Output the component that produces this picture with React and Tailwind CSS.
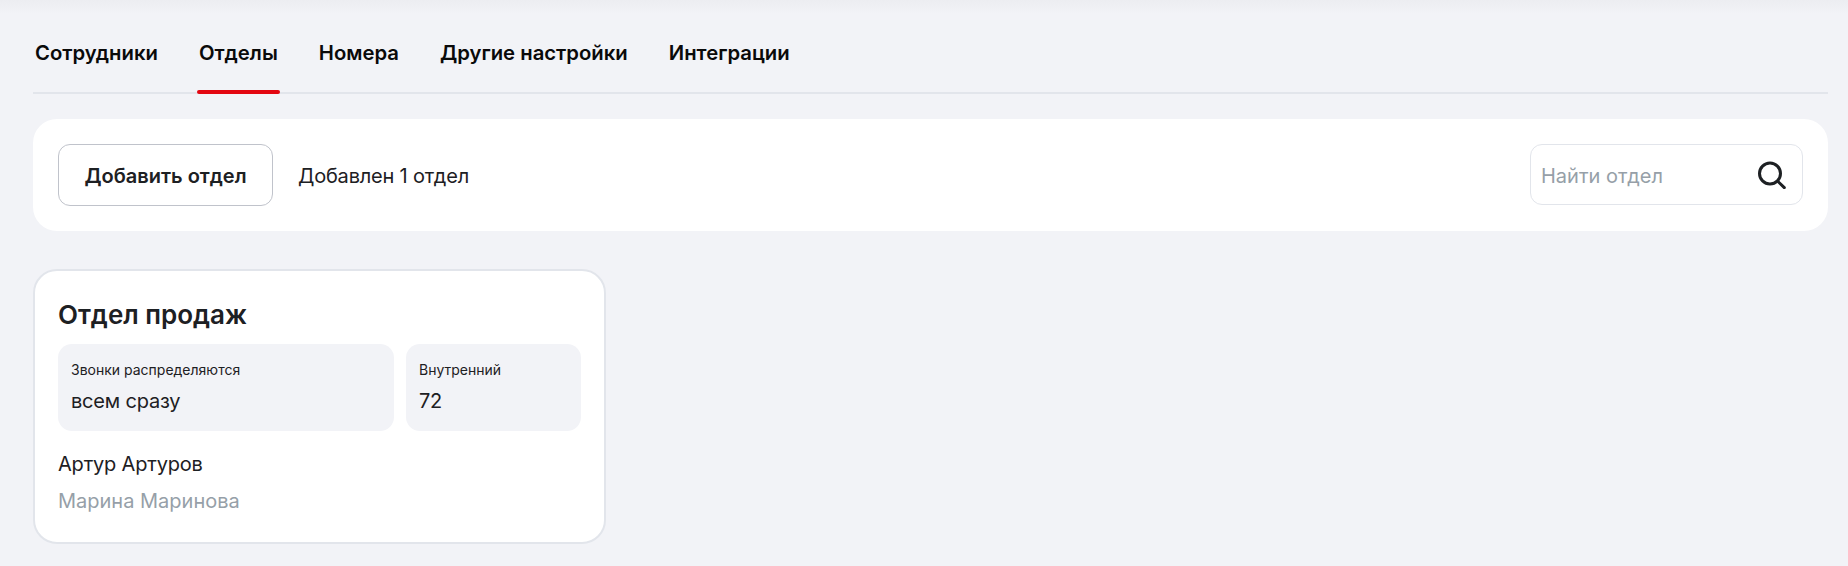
function Tab({ label, active }) {
  return (
    <div className="relative h-full px-[2px] pt-[11px]">
      <span className="text-[20.3px] font-semibold leading-[24px] text-[#0a0a0a]">{label}</span>
      {active && <div className="absolute left-0 right-0 -bottom-[2px] h-[4px] rounded-[2px] bg-[#e30611]" />}
    </div>
  )
}

function Stat({ label, value, className }) {
  return (
    <div className={`h-[87px] rounded-[14px] bg-[#f2f3f7] pl-[13px] pr-[12px] pt-[16px] ${className}`}>
      <div className="text-[14px] leading-[20px] text-[#1d2023]">{label}</div>
      <div className="mt-[9px] text-[20px] leading-[24px] tracking-[-0.01em] text-[#1d2023]">{value}</div>
    </div>
  )
}

export default function App() {
  return (
    <div className="min-h-[566px] bg-[linear-gradient(#ecedf1,#f2f3f7_14px)] pl-[33px] pr-[20px] pt-[30px] font-['Inter',sans-serif] text-[#1d2023]">
      <div className="flex h-[64px] gap-[37px] border-b-2 border-[#e2e5eb]">
        <Tab label="Сотрудники" />
        <Tab label="Отделы" active />
        <Tab label="Номера" />
        <Tab label="Другие настройки" />
        <Tab label="Интеграции" />
      </div>

      <div className="mt-[25px] flex h-[112px] items-center rounded-[24px] bg-white px-[25px]">
        <button className="h-[62px] w-[215px] rounded-[12px] border border-[#c0c3cb] pt-[2px] text-[20px] font-semibold text-[#1d2023]">
          Добавить отдел
        </button>
        <span className="ml-[25px] pt-[2px] text-[20px] tracking-[-0.01em] text-[#1d2023]">Добавлен 1 отдел</span>
        <div className="-mt-[1px] ml-auto flex h-[61px] w-[273px] items-center justify-between rounded-[12px] border border-[#e2e5eb] pl-[10px] pr-[16px]">
          <span className="pt-[2px] text-[20px] text-[#969fa8]">Найти отдел</span>
          <svg width="28" height="28" viewBox="0 0 28 28" fill="none" stroke="#1d2023" strokeWidth="3" strokeLinecap="round">
            <circle cx="12" cy="12.5" r="10.5" />
            <path d="M20.5 21L26.3 26.6" />
          </svg>
        </div>
      </div>

      <div className="mt-[38px] h-[275px] w-[573px] rounded-[24px] border-2 border-[#e2e5eb] bg-white px-[23px] pt-[28px]">
        <div className="text-[26px] font-semibold leading-[32px] text-[#1d2023]">Отдел продаж</div>
        <div className="mt-[13px] flex gap-[12px]">
          <Stat label="Звонки распределяются" value="всем сразу" className="w-[336px]" />
          <Stat label="Внутренний" value="72" className="w-[175px]" />
        </div>
        <div className="mt-[21px] text-[20px] leading-[24px] tracking-[-0.01em] text-[#1d2023]">Артур Артуров</div>
        <div className="mt-[13px] text-[20px] leading-[24px] text-[#969fa8]">Марина Маринова</div>
      </div>
    </div>
  )
}
